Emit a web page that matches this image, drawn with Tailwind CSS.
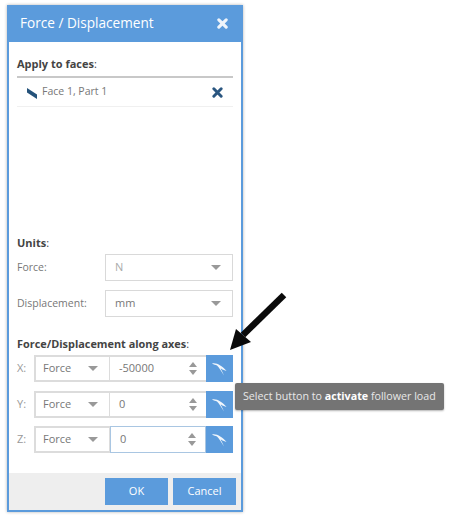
<!DOCTYPE html>
<html lang="en">
<head>
  <meta charset="UTF-8">
  <title>Force / Displacement</title>
  <script src="https://cdn.jsdelivr.net/npm/@tailwindcss/browser@4"></script>
</head>
<body class="bg-white font-['Open_Sans',sans-serif] text-[#666]">
  <div class="relative w-[450px] h-[517px] overflow-hidden pl-[7px] pt-[5px]">
    <!-- Dialog -->
    <div class="w-[236px] h-[507px] border-2 border-t-0 border-[#5b9bdc] bg-white flex flex-col shadow-[0_0_3px_rgba(0,0,0,0.3)]">
      <div class="h-[37px] shrink-0 bg-[#5b9bdc] flex items-center justify-between pl-[11px] pr-[13px] text-white">
        <span class="text-[13.6px]">Force / Displacement</span>
        <svg class="w-[11px] h-[11px]" viewBox="0 0 12 12"><path d="M2 2l8 8M10 2l-8 8" stroke="#eef4fb" stroke-width="3.4" stroke-linecap="round"/></svg>
      </div>

      <div class="flex-1 flex flex-col pl-[8px] pr-[8px] text-[11px]">
        <div class="mt-[14px] h-[20px] font-bold text-[#444] leading-[16px]">Apply to faces<span class="font-normal">:</span></div>
        <div class="h-[2px] w-[216px] bg-[#c8c8c8]"></div>
        <div class="h-[29px] w-[216px] border-b border-[#f0f0f0] flex items-center pl-[10px] pr-[10px]">
          <svg class="w-[11px] h-[12px] mr-[4px] mt-[2px]" viewBox="0 0 11 12"><path d="M0 1l10 6.5V12L0 5.5z" fill="#24527a"/></svg>
          <span class="text-[10.5px] text-[#777]">Face 1, Part 1</span>
          <svg class="w-[11px] h-[11px] ml-auto" viewBox="0 0 12 12"><path d="M2 2l8 8M10 2l-8 8" stroke="#2a5680" stroke-width="3.2" stroke-linecap="round"/></svg>
        </div>

        <div class="mt-[128px] h-[16px] leading-[16px] font-bold text-[#444]">Units<span class="font-normal">:</span></div>
        <div class="mt-[3px] flex items-center h-[27px] w-[216px]">
          <span class="w-[88px] text-[10.5px] text-[#777]">Force:</span>
          <div class="w-[128px] h-[27px] border border-[#d9d9d9] flex items-center justify-between pl-[9px] pr-[11px] text-[#aaa]">
            <span>N</span>
            <span class="w-0 h-0 border-x-[5px] border-x-transparent border-t-[5px] border-t-[#999]"></span>
          </div>
        </div>
        <div class="mt-[9px] flex items-center h-[27px] w-[216px]">
          <span class="w-[88px] text-[10.5px] text-[#777]">Displacement:</span>
          <div class="w-[128px] h-[27px] border border-[#d9d9d9] flex items-center justify-between pl-[9px] pr-[11px] text-[#777]">
            <span>mm</span>
            <span class="w-0 h-0 border-x-[5px] border-x-transparent border-t-[5px] border-t-[#999]"></span>
          </div>
        </div>

        <div class="mt-[19px] h-[16px] leading-[16px] font-bold text-[10.9px] text-[#444]">Force/Displacement along axes<span class="font-normal">:</span></div>

        <!-- X -->
        <div class="mt-[3px] flex items-center h-[27px] w-[216px]">
          <span class="w-[17px] text-[#999]">X:</span>
          <div class="w-[76px] h-[27px] border-2 border-r-1 border-[#dcdcdc] flex items-center justify-between pl-[7px] pr-[11px] text-[#777]">
            <span>Force</span><span class="w-0 h-0 border-x-[5px] border-x-transparent border-t-[5px] border-t-[#999]"></span>
          </div>
          <div class="w-[96px] h-[27px] border-2 border-x-0 border-[#dcdcdc] flex items-center justify-between pl-[9px] pr-[9px] text-[#777]">
            <span>-50000</span>
            <span class="flex flex-col gap-[3px]"><span class="block w-0 h-0 border-x-[4px] border-x-transparent border-b-[5px] border-b-[#999]"></span><span class="block w-0 h-0 border-x-[4px] border-x-transparent border-t-[5px] border-t-[#999]"></span></span>
          </div>
          <div class="w-[27px] h-[27px] bg-[#5b9bdc] flex items-center justify-center">
            <svg class="w-[15px] h-[14px]" viewBox="0 0 15 14"><path d="M0 1.5C5 .5 10 4 14.5 9C10.5 7.5 9.5 7 8.5 6.5C10 9 11 11 12 13.5C9.5 9.5 7 5.5 5 3.5C3.5 3 2 2.5 0 1.5z" fill="#f2f7fc"/></svg>
          </div>
        </div>
        <!-- Y -->
        <div class="mt-[9px] flex items-center h-[27px] w-[216px]">
          <span class="w-[17px] text-[#999]">Y:</span>
          <div class="w-[76px] h-[27px] border-2 border-r-1 border-[#dcdcdc] flex items-center justify-between pl-[7px] pr-[11px] text-[#777]">
            <span>Force</span><span class="w-0 h-0 border-x-[5px] border-x-transparent border-t-[5px] border-t-[#999]"></span>
          </div>
          <div class="w-[96px] h-[27px] border-2 border-x-0 border-[#dcdcdc] flex items-center justify-between pl-[9px] pr-[9px] text-[#777]">
            <span>0</span>
            <span class="flex flex-col gap-[3px]"><span class="block w-0 h-0 border-x-[4px] border-x-transparent border-b-[5px] border-b-[#999]"></span><span class="block w-0 h-0 border-x-[4px] border-x-transparent border-t-[5px] border-t-[#999]"></span></span>
          </div>
          <div class="w-[27px] h-[27px] bg-[#5b9bdc] flex items-center justify-center">
            <svg class="w-[15px] h-[14px]" viewBox="0 0 15 14"><path d="M0 1.5C5 .5 10 4 14.5 9C10.5 7.5 9.5 7 8.5 6.5C10 9 11 11 12 13.5C9.5 9.5 7 5.5 5 3.5C3.5 3 2 2.5 0 1.5z" fill="#f2f7fc"/></svg>
          </div>
        </div>
        <!-- Z -->
        <div class="mt-[8px] flex items-center h-[27px] w-[216px]">
          <span class="w-[17px] text-[#999]">Z:</span>
          <div class="w-[76px] h-[27px] border-2 border-r-1 border-[#dcdcdc] flex items-center justify-between pl-[7px] pr-[11px] text-[#777]">
            <span>Force</span><span class="w-0 h-0 border-x-[5px] border-x-transparent border-t-[5px] border-t-[#999]"></span>
          </div>
          <div class="w-[96px] h-[27px] border border-[#a9c6e2] flex items-center justify-between pl-[9px] pr-[9px] text-[#777]">
            <span>0</span>
            <span class="flex flex-col gap-[3px]"><span class="block w-0 h-0 border-x-[4px] border-x-transparent border-b-[5px] border-b-[#999]"></span><span class="block w-0 h-0 border-x-[4px] border-x-transparent border-t-[5px] border-t-[#999]"></span></span>
          </div>
          <div class="w-[27px] h-[27px] bg-[#5b9bdc] flex items-center justify-center">
            <svg class="w-[15px] h-[14px]" viewBox="0 0 15 14"><path d="M0 1.5C5 .5 10 4 14.5 9C10.5 7.5 9.5 7 8.5 6.5C10 9 11 11 12 13.5C9.5 9.5 7 5.5 5 3.5C3.5 3 2 2.5 0 1.5z" fill="#f2f7fc"/></svg>
          </div>
        </div>
      </div>

      <!-- Footer -->
      <div class="h-[37px] shrink-0 bg-[#eeeeee] flex items-center justify-end gap-[5px] pr-[5px] text-[11px] text-white">
        <button class="w-[63px] h-[27px] bg-[#5b9bdc]">OK</button>
        <button class="w-[63px] h-[27px] bg-[#5b9bdc]">Cancel</button>
      </div>
    </div>

    <!-- Callout arrow -->
    <svg class="absolute left-[225px] top-[288px] w-[65px] h-[65px]" viewBox="0 0 65 65"><path d="M59 7L18 47" stroke="#0a0a0a" stroke-width="6.5"/><path d="M5 62L11 41L26 54z" fill="#0a0a0a"/></svg>

    <!-- Tooltip -->
    <div class="absolute left-[235px] top-[383px] w-[209px] h-[27px] bg-[#747474] rounded-[2px] shadow-[0_1px_2px_rgba(0,0,0,0.3)] flex items-center pl-[8px] text-[10.7px] text-[#e8e8e8] whitespace-nowrap">
      <span>Select button to <b class="text-white">activate</b> follower load</span>
    </div>
  </div>
</body>
</html>
